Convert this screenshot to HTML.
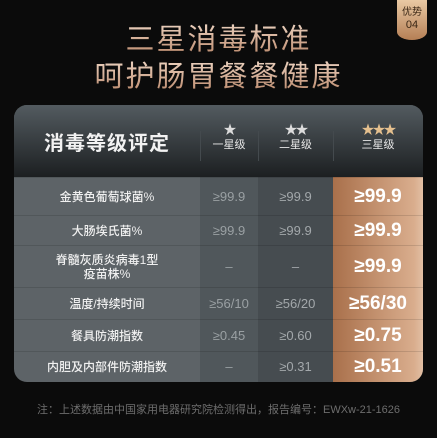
<!DOCTYPE html><html><head><meta charset="utf-8"><style>
*{margin:0;padding:0;box-sizing:border-box}
body{width:442px;height:442px;background:#fff;overflow:hidden;font-family:"Liberation Sans","Noto Sans CJK SC",sans-serif;position:relative}
#bg{position:absolute;left:0;top:0;width:437px;height:438px;background:#0b0b0b}
.t{position:absolute;left:0;width:437px;text-align:center;font-size:29px;letter-spacing:2px;color:#d8b49a;background:linear-gradient(180deg,#f6e2d2,#b88466);-webkit-background-clip:text;background-clip:text;-webkit-text-fill-color:transparent;font-weight:400}
#badge{position:absolute;left:397px;top:0;width:30px;height:40px;background:linear-gradient(180deg,#e9c9a4,#b57f55);border-radius:0 0 15px 15px/0 0 8px 8px;text-align:center;font-size:10px;color:#3a2615;line-height:12px;padding-top:7px}
#tbl{position:absolute;left:14px;top:105px;width:409px;height:277px;border-radius:13px;overflow:hidden;background:#5d6367}
#hd{position:absolute;left:0;top:0;width:409px;height:72px;background:linear-gradient(180deg,#535b60,#1c1f21)}
.hl{position:absolute;left:0;top:22px;width:186px;text-align:center;color:#f2f2f2;font-size:20px;font-weight:bold;letter-spacing:1px}
.hc{position:absolute;top:18px;text-align:center;color:#e6e6e6;font-size:11px;line-height:14px}
.st{font-size:13px;color:#dcdcdc;letter-spacing:-2px}
.vd{position:absolute;top:26px;width:1px;height:30px;background:#444a4e}
.c1{position:absolute;left:186px;top:72px;width:58px;height:205px;background:#50575b}
.c2{position:absolute;left:244px;top:72px;width:75px;height:205px;background:#464c50}
.c3{position:absolute;left:319px;top:72px;width:90px;height:205px;background:linear-gradient(90deg,#a9704b,#d9ad8d 90%,#e2bfa4)}
.row{position:absolute;left:0;width:409px;border-top:1px solid rgba(0,0,0,.12);color:#f0f0f0;font-size:12px}
.row div{position:absolute;top:0;height:100%;display:flex;align-items:center;justify-content:center;text-align:center;line-height:14px}
.a{left:0;width:186px;font-weight:500}
.b{left:186px;width:58px;color:#9aa0a3;font-size:13px}
.c{left:244px;width:75px;color:#a3a8ab;font-size:13px}
.d{left:319px;width:90px;font-size:19px;font-weight:bold;color:#fff}
#foot{position:absolute;left:0;width:437px;top:401px;text-align:center;font-size:11px;color:#6d6d6d}
</style></head><body>
<div id="bg"></div>
<div class="t" style="top:16px">三星消毒标准</div>
<div class="t" style="top:53px">呵护肠胃餐餐健康</div>
<div id="badge">优势<br><span style="font-size:11px">04</span></div>
<div id="tbl">
<div id="hd">
<div class="hl">消毒等级评定</div>
<div class="vd" style="left:186px"></div><div class="vd" style="left:244px"></div><div class="vd" style="left:319px"></div>
<div class="hc" style="left:186px;width:58px"><span class="st">★</span><br>一星级</div>
<div class="hc" style="left:244px;width:75px"><span class="st">★★</span><br>二星级</div>
<div class="hc" style="left:319px;width:90px"><span class="st" style="color:#e5c08e">★★★</span><br>三星级</div>
</div>
<div class="c1"></div><div class="c2"></div><div class="c3"></div>
<div class="row" style="top:72px;height:38px"><div class="a">金黄色葡萄球菌%</div><div class="b">≥99.9</div><div class="c">≥99.9</div><div class="d">≥99.9</div></div>
<div class="row" style="top:110px;height:30px"><div class="a">大肠埃氏菌%</div><div class="b">≥99.9</div><div class="c">≥99.9</div><div class="d">≥99.9</div></div>
<div class="row" style="top:140px;height:42px"><div class="a">脊髓灰质炎病毒1型<br>疫苗株%</div><div class="b">–</div><div class="c">–</div><div class="d">≥99.9</div></div>
<div class="row" style="top:182px;height:32px"><div class="a">温度/持续时间</div><div class="b">≥56/10</div><div class="c">≥56/20</div><div class="d">≥56/30</div></div>
<div class="row" style="top:214px;height:32px"><div class="a">餐具防潮指数</div><div class="b">≥0.45</div><div class="c">≥0.60</div><div class="d">≥0.75</div></div>
<div class="row" style="top:246px;height:31px"><div class="a">内胆及内部件防潮指数</div><div class="b">–</div><div class="c">≥0.31</div><div class="d">≥0.51</div></div>
</div>
<div id="foot">注：上述数据由中国家用电器研究院检测得出，报告编号：EWXw-21-1626</div>
</body></html>
